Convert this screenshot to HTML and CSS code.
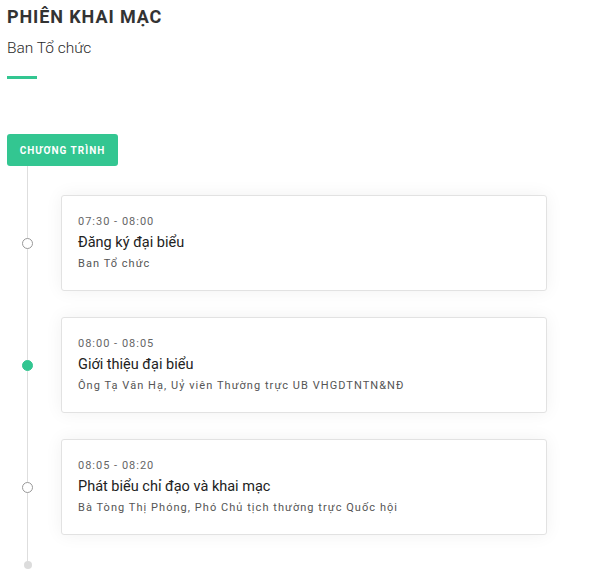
FILE: index.html
```html
<!DOCTYPE html>
<html lang="vi">
<head>
<meta charset="utf-8">
<link rel="stylesheet" href="styles.css">
</head>
<body>
<div class="page">
  <h1 class="title">PHIÊN KHAI MẠC</h1>
  <p class="subtitle">Ban Tổ chức</p>
  <div class="accent"></div>
  <div class="program">
    <span class="badge">CHƯƠNG TRÌNH</span>
    <div class="timeline">
      <div class="item">
        <div class="marker"><span class="dot"></span></div>
        <div class="card">
          <div class="time">07:30 - 08:00</div>
          <div class="name">Đăng ký đại biểu</div>
          <div class="who">Ban Tổ chức</div>
        </div>
      </div>
      <div class="item">
        <div class="marker"><span class="dot active"></span></div>
        <div class="card">
          <div class="time">08:00 - 08:05</div>
          <div class="name">Giới thiệu đại biểu</div>
          <div class="who">Ông Tạ Văn Hạ, Uỷ viên Thường trực UB VHGDTNTN&amp;NĐ</div>
        </div>
      </div>
      <div class="item">
        <div class="marker"><span class="dot"></span></div>
        <div class="card">
          <div class="time">08:05 - 08:20</div>
          <div class="name">Phát biểu chỉ đạo và khai mạc</div>
          <div class="who">Bà Tòng Thị Phóng, Phó Chủ tịch thường trực Quốc hội</div>
        </div>
      </div>
      <div class="end"><span class="end-dot"></span></div>
    </div>
  </div>
</div>
</body>
</html>
```
FILE: styles.css
```css
* { box-sizing: border-box; }
html, body { margin: 0; padding: 0; background: #fff; }
body { font-family: Roboto, "Noto Sans", Arial, sans-serif; color: #333; }
.page { padding: 6px 43px 0 7px; }
.title {
  margin: 0;
  font-size: 18px;
  line-height: 22px;
  font-weight: 700;
  letter-spacing: 0.9px;
  color: #333;
}
.subtitle {
  margin: 11px 0 0;
  font-size: 15.5px;
  line-height: 18px;
  font-weight: 300;
  color: #2a2a2a;
}
.accent {
  width: 30px;
  height: 3px;
  background: #33c691;
  margin-top: 19px;
}
.program { margin-top: 55px; }
.badge {
  display: inline-flex;
  align-items: center;
  justify-content: center;
  width: 111px;
  height: 32px;
  background: #33c691;
  color: #fff;
  border-radius: 3px;
  font-size: 10px;
  font-weight: 700;
  letter-spacing: 1px;
}
.timeline {
  position: relative;
  padding-top: 29px;
}
.timeline::before {
  content: "";
  position: absolute;
  left: 20px;
  top: 0;
  bottom: 4px;
  width: 1px;
  background: #dedede;
}
.item {
  display: flex;
  align-items: center;
  margin-bottom: 26px;
}
.marker {
  width: 54px;
  flex: none;
  position: relative;
}
.dot {
  display: block;
  width: 11px;
  height: 11px;
  margin-left: 15px;
  border-radius: 50%;
  border: 1px solid #999;
  background: #fff;
  position: relative;
}
.dot.active {
  border-color: #33c691;
  background: #33c691;
}
.card {
  flex: 1;
  border: 1px solid #e2e2e2;
  border-radius: 3px;
  background: #fff;
  box-shadow: 0 0 18px rgba(0, 0, 0, 0.06);
  padding: 18px 16px 18px;
}
.time {
  font-size: 11px;
  line-height: 16px;
  letter-spacing: 1px;
  color: #666;
}
.name {
  margin-top: 3px;
  font-size: 14.5px;
  line-height: 20px;
  font-weight: 400;
  color: #222;
}
.who {
  margin-top: 3px;
  font-size: 11px;
  line-height: 16px;
  letter-spacing: 1.05px;
  color: #555;
}
.end {
  height: 8px;
  margin-top: 26px;
  position: relative;
}
.end-dot {
  display: block;
  width: 8px;
  height: 8px;
  border-radius: 50%;
  background: #dcdcdc;
  margin-left: 16.5px;
  position: relative;
}
```
